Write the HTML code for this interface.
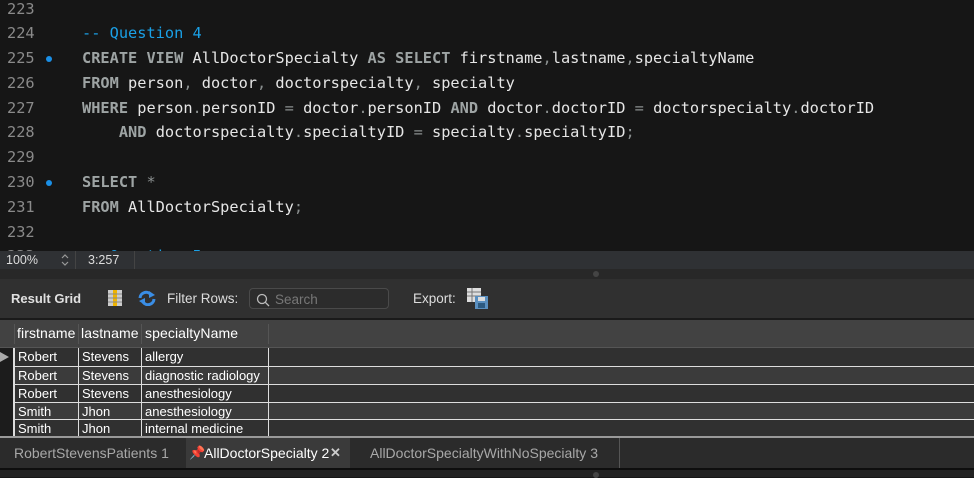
<!DOCTYPE html>
<html><head><style>
*{margin:0;padding:0;box-sizing:border-box}
body{width:974px;height:477px;overflow:hidden;background:#161616;position:relative;font-family:"Liberation Sans",sans-serif}
.ed{position:absolute;left:0;top:0;width:974px;height:251px;background:#161616;overflow:hidden;font-family:"DejaVu Sans Mono",monospace;font-size:15.3px;color:#e6e6e6}
.ln{position:absolute;left:0;height:25px;line-height:25px;white-space:pre}
.n{position:absolute;left:7px;color:#8a8a8a}
.c{position:absolute;left:82px}
.k{color:#9ea4a4;font-weight:bold}
.p{color:#8a8f8f}
.cm{color:#1aa0e6}
.dot{position:absolute;left:46px;width:6px;height:6px;border-radius:50%;background:#1a8fe6}
.sb{position:absolute;top:251px;left:0;width:974px;height:18px;background:#2f3134;font-size:12.5px;color:#ddd}
.s1{position:absolute;top:279px;left:0;width:974px;height:39px;background:#303030}
.hdr{position:absolute;top:320px;left:0;width:974px;height:28px;background:#424242;border-bottom:1px solid #555}
.hdr span{font-size:14px;color:#fff;font-weight:500;letter-spacing:0.1px}
.row{position:absolute;left:0;width:974px;height:18px;font-size:13px;color:#fff;line-height:17px}
.cell{position:absolute;top:0;height:100%;padding-left:3px}
.tabs{position:absolute;top:438px;left:0;width:974px;height:30px;background:#2b2b2b;font-size:14px;color:#a8a8a8;line-height:30px}
</style></head><body>
<div class="ed">
<div class="ln" style="top:-3px"><span class="n">223</span></div>
<div class="ln" style="top:21px"><span class="n">224</span><span class="c cm">-- Question 4</span></div>
<div class="ln" style="top:46px"><span class="n">225</span><span class="dot" style="top:10px"></span><span class="c"><span class="k">CREATE VIEW</span> AllDoctorSpecialty <span class="k">AS SELECT</span> firstname<span class="p">,</span>lastname<span class="p">,</span>specialtyName</span></div>
<div class="ln" style="top:71px"><span class="n">226</span><span class="c"><span class="k">FROM</span> person<span class="p">,</span> doctor<span class="p">,</span> doctorspecialty<span class="p">,</span> specialty</span></div>
<div class="ln" style="top:96px"><span class="n">227</span><span class="c"><span class="k">WHERE</span> person<span class="p">.</span>personID <span class="p">=</span> doctor<span class="p">.</span>personID <span class="k">AND</span> doctor<span class="p">.</span>doctorID <span class="p">=</span> doctorspecialty<span class="p">.</span>doctorID</span></div>
<div class="ln" style="top:120px"><span class="n">228</span><span class="c">    <span class="k">AND</span> doctorspecialty<span class="p">.</span>specialtyID <span class="p">=</span> specialty<span class="p">.</span>specialtyID<span class="p">;</span></span></div>
<div class="ln" style="top:145px"><span class="n">229</span></div>
<div class="ln" style="top:170px"><span class="n">230</span><span class="dot" style="top:10px"></span><span class="c"><span class="k">SELECT</span> <span class="p">*</span></span></div>
<div class="ln" style="top:195px"><span class="n">231</span><span class="c"><span class="k">FROM</span> AllDoctorSpecialty<span class="p">;</span></span></div>
<div class="ln" style="top:220px"><span class="n">232</span></div>
<div class="ln" style="top:244px"><span class="n">233</span><span class="c cm">-- Question 5</span></div>
</div>
<div class="sb">
<span style="position:absolute;left:6px;top:2px">100%</span>
<svg style="position:absolute;left:60px;top:2px" width="10" height="14"><path d="M2 5 L5 2 L8 5 M2 9 L5 12 L8 9" stroke="#999" fill="none" stroke-width="1.2"/></svg>
<div style="position:absolute;left:75px;top:0;width:1px;height:18px;background:#444"></div>
<span style="position:absolute;left:88px;top:2px">3:257</span>
<div style="position:absolute;left:134px;top:0;width:1px;height:18px;background:#444"></div>
</div>
<div style="position:absolute;top:269px;left:0;width:974px;height:10px;background:#282828"></div>
<div style="position:absolute;left:593px;top:271px;width:6px;height:6px;border-radius:50%;background:#444"></div>
<div class="s1">
<span style="position:absolute;left:11px;top:12px;font-size:13px;font-weight:bold;color:#e0e0e0">Result Grid</span>
<svg style="position:absolute;left:108px;top:11px" width="14" height="16"><rect x="0" y="0" width="14" height="16" fill="#ccc"/><rect x="5" y="0" width="4" height="16" fill="#f0b400"/><path d="M0 4H14M0 8H14M0 12H14" stroke="#888"/></svg>
<svg style="position:absolute;left:137px;top:11px" width="20" height="16"><path d="M3 8 A6 6 0 0 1 14 5" stroke="#3a8ee6" stroke-width="3" fill="none"/><path d="M12 1 L18 5 L12 8Z" fill="#3a8ee6"/><path d="M17 9 A6 6 0 0 1 6 12" stroke="#3a8ee6" stroke-width="3" fill="none"/><path d="M8 8 L2 11 L8 15Z" fill="#3a8ee6"/></svg>
<span style="position:absolute;left:167px;top:12px;font-size:13.5px;color:#ddd">Filter Rows:</span>
<div style="position:absolute;left:249px;top:9px;width:140px;height:21px;border:1px solid #4a4a4a;border-radius:4px;background:#2c2c2c"></div>
<svg style="position:absolute;left:256px;top:14px" width="14" height="14"><circle cx="6" cy="6" r="4.5" stroke="#bbb" fill="none" stroke-width="1.3"/><path d="M9.3 9.3 L13 13" stroke="#bbb" stroke-width="1.3"/></svg>
<span style="position:absolute;left:275px;top:13px;font-size:13.5px;color:#777">Search</span>
<span style="position:absolute;left:413px;top:12px;font-size:13.5px;color:#ddd">Export:</span>
<svg style="position:absolute;left:467px;top:9px" width="22" height="22"><rect x="0" y="0" width="14" height="14" fill="#ddd"/><path d="M0 4H14M0 8H14M5 0V14" stroke="#777"/><rect x="8" y="8" width="13" height="13" fill="#5a8fbf"/><rect x="11" y="9" width="7" height="4" fill="#ddd"/><rect x="11" y="15" width="7" height="5" fill="#2d5a80"/></svg>
</div>
<div style="position:absolute;top:318px;left:0;width:974px;height:2px;background:#1a1a1a"></div>
<div class="hdr">
<div style="position:absolute;left:14px;top:4px;width:1px;height:20px;background:#555"></div>
<div style="position:absolute;left:78px;top:4px;width:1px;height:20px;background:#555"></div>
<div style="position:absolute;left:141px;top:4px;width:1px;height:20px;background:#555"></div>
<div style="position:absolute;left:268px;top:4px;width:1px;height:20px;background:#555"></div>
<span style="position:absolute;left:17px;top:5px">firstname</span>
<span style="position:absolute;left:81px;top:5px">lastname</span>
<span style="position:absolute;left:145px;top:5px">specialtyName</span>
</div>
<div style="position:absolute;top:348px;left:0;width:974px;height:90px;background:#303030"></div>
<div class="row" style="top:348px;background:#303030"><div class="cell" style="left:15px">Robert</div><div class="cell" style="left:79px">Stevens</div><div class="cell" style="left:142px">allergy</div></div>
<div class="row" style="top:366px;background:#3b3b3b;border-top:1px solid #ddd"><div class="cell" style="left:15px">Robert</div><div class="cell" style="left:79px">Stevens</div><div class="cell" style="left:142px">diagnostic radiology</div></div>
<div class="row" style="top:384px;background:#303030;border-top:1px solid #ddd"><div class="cell" style="left:15px">Robert</div><div class="cell" style="left:79px">Stevens</div><div class="cell" style="left:142px">anesthesiology</div></div>
<div class="row" style="top:402px;background:#3b3b3b;border-top:1px solid #ddd"><div class="cell" style="left:15px">Smith</div><div class="cell" style="left:79px">Jhon</div><div class="cell" style="left:142px">anesthesiology</div></div>
<div class="row" style="top:419px;background:#303030;border-top:1px solid #ddd"><div class="cell" style="left:15px">Smith</div><div class="cell" style="left:79px">Jhon</div><div class="cell" style="left:142px">internal medicine</div></div>
<div style="position:absolute;top:348px;left:0;width:13px;height:89px;background:#1c1c1c"></div>
<svg style="position:absolute;left:0;top:351px" width="10" height="12"><path d="M0 1 L9 6 L0 11Z" fill="#aaa"/></svg>
<div style="position:absolute;top:348px;left:13px;width:2px;height:89px;background:#ddd"></div>
<div style="position:absolute;top:348px;left:78px;width:1px;height:89px;background:#ddd"></div>
<div style="position:absolute;top:348px;left:141px;width:1px;height:89px;background:#ddd"></div>
<div style="position:absolute;top:348px;left:268px;width:1px;height:89px;background:#ddd"></div>
<div style="position:absolute;top:436px;left:0;width:974px;height:2px;background:#999"></div>
<div class="tabs">
<span style="position:absolute;left:14px">RobertStevensPatients 1</span>
<div style="position:absolute;left:186px;top:0;width:164px;height:30px;background:#3a3a3a"></div>
<span style="position:absolute;left:189px;color:#e03030;font-size:13px">📌</span>
<span style="position:absolute;left:204px;color:#fff">AllDoctorSpecialty 2</span>
<span style="position:absolute;left:330px;color:#ccc;font-weight:bold;font-size:13px">✕</span>
<span style="position:absolute;left:370px">AllDoctorSpecialtyWithNoSpecialty 3</span>
<div style="position:absolute;left:619px;top:0;width:1px;height:30px;background:#555"></div>
</div>
<div style="position:absolute;top:468px;left:0;width:974px;height:2px;background:#0e0e0e"></div>
<div style="position:absolute;top:470px;left:0;width:974px;height:7px;background:#222"></div>
<div style="position:absolute;left:593px;top:472px;width:6px;height:6px;border-radius:50%;background:#444"></div>
</body></html>
